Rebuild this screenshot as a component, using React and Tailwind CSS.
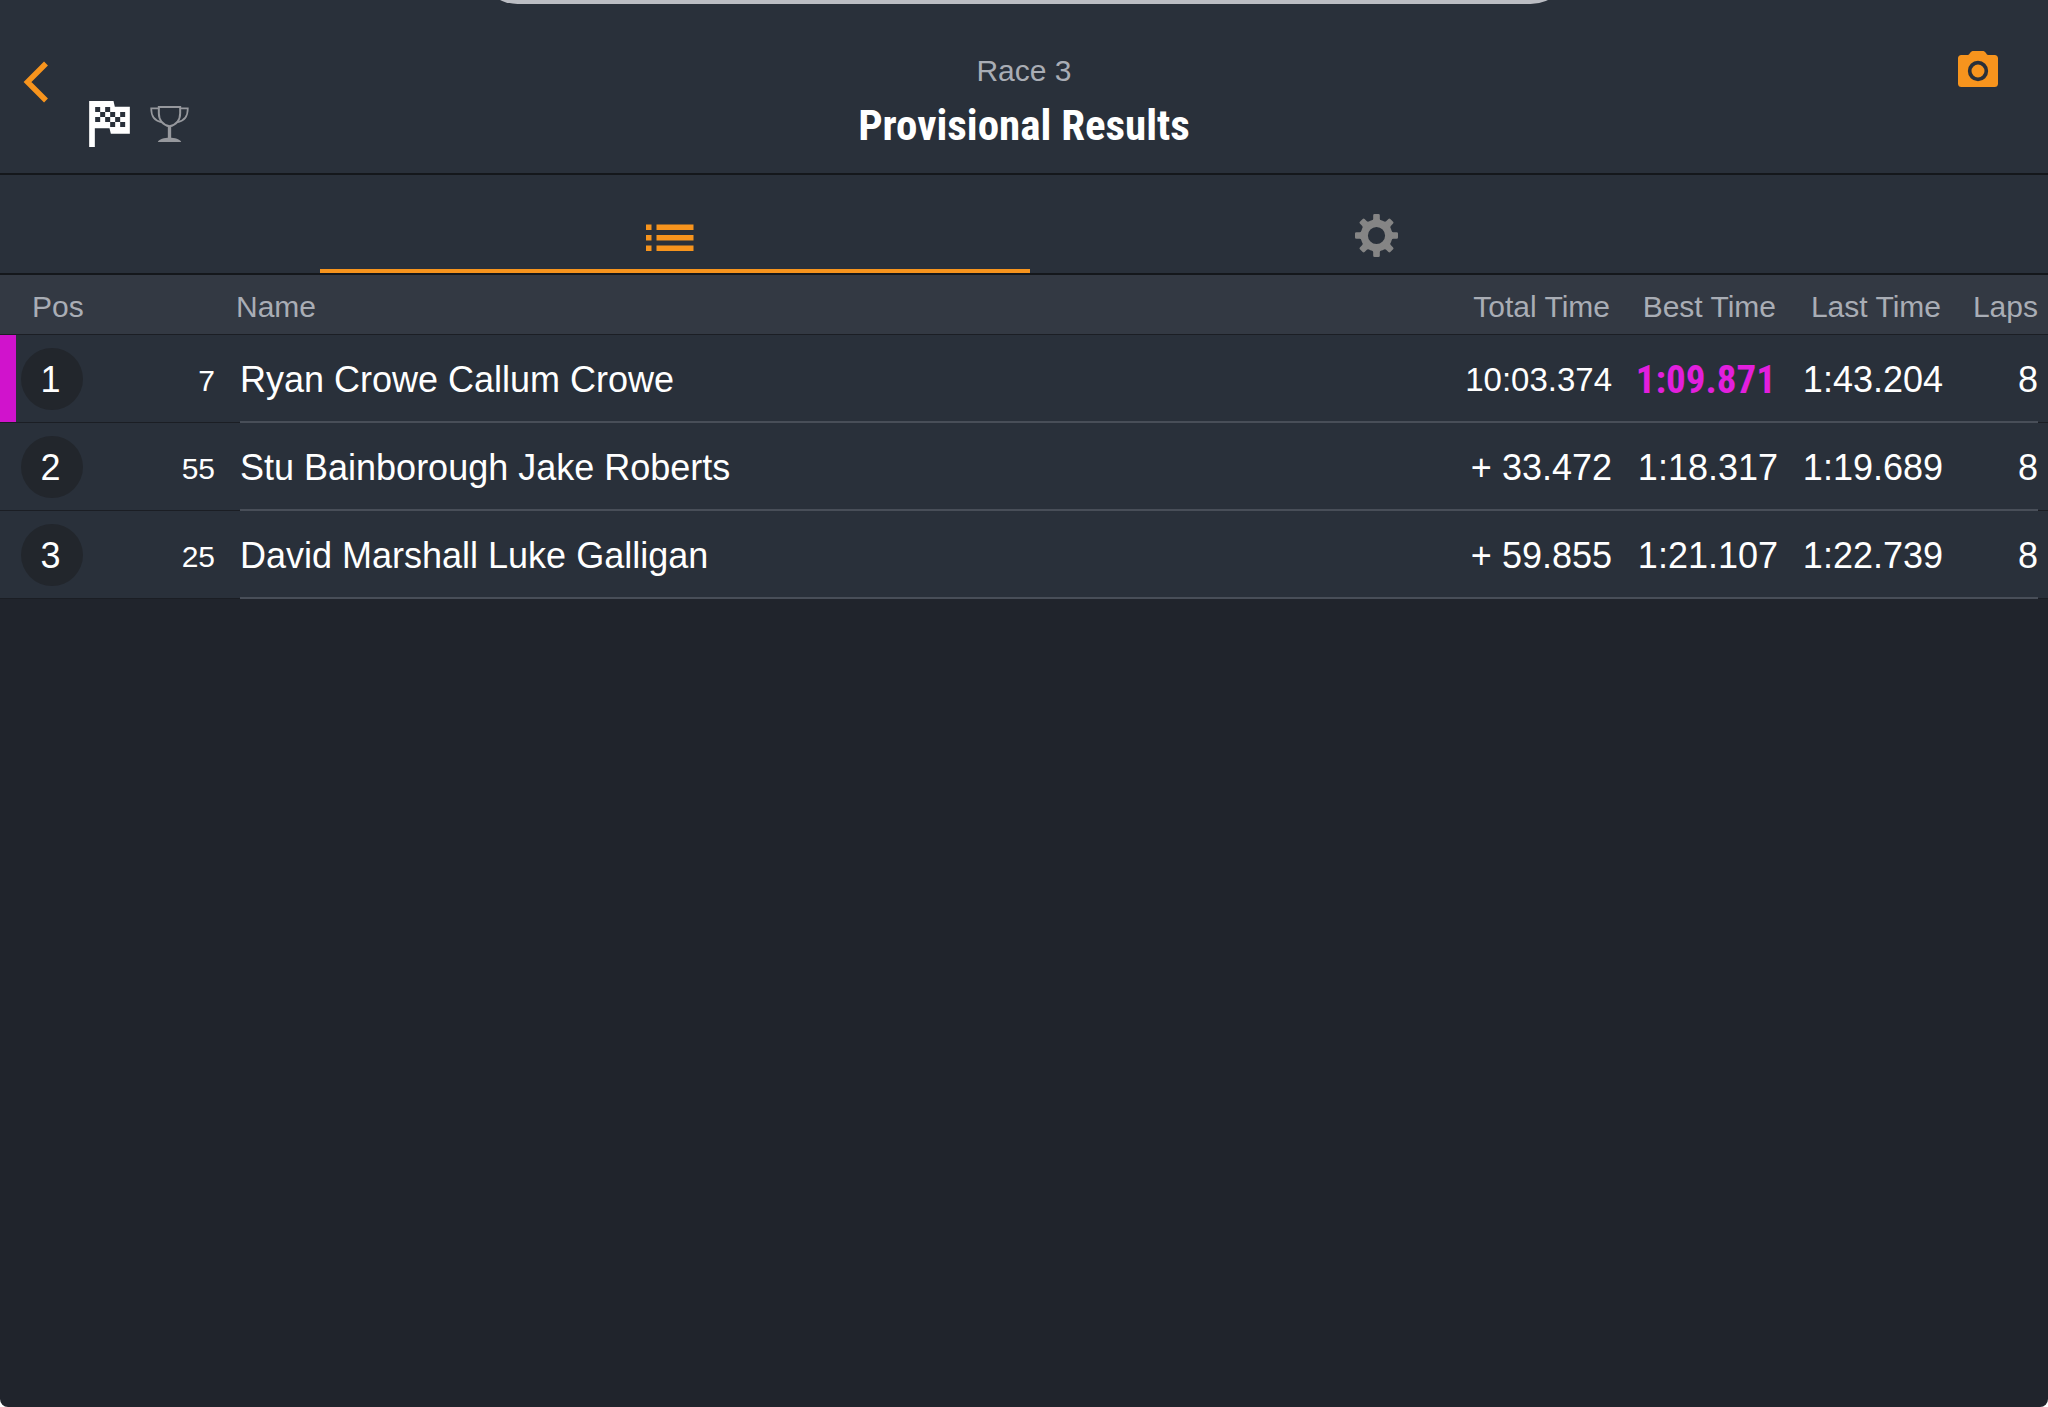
import React from 'react';

const results = [
  { pos: 1, number: 7, name: 'Ryan Crowe Callum Crowe', total: '10:03.374', best: '1:09.871', last: '1:43.204', laps: 8, fastest: true },
  { pos: 2, number: 55, name: 'Stu Bainborough Jake Roberts', total: '+ 33.472', best: '1:18.317', last: '1:19.689', laps: 8 },
  { pos: 3, number: 25, name: 'David Marshall Luke Galligan', total: '+ 59.855', best: '1:21.107', last: '1:22.739', laps: 8 },
];

const BackIcon = () => (
  <svg width="26" height="42" viewBox="0 0 26 42" fill="none" stroke="#f7941d" strokeWidth="5.5">
    <path d="M23 2.5 L4.5 21 L23 39.5" />
  </svg>
);

const FlagIcon = () => (
  <svg width="41" height="46" viewBox="0 0 122 138">
    <path fill="#fff" d="M0 0H73L77 17H122V98H65L61 82H17V138H0Z" />
    <path
      fill="#29303a"
      d="M18 18h15v15h-15z M48 18h15v15h-15z M33 33h15v15h-15z M63 33h15v15h-15z M93 33h15v15h-15z M18 48h15v15h-15z M48 48h15v15h-15z M78 48h15v15h-15z M63 63h15v15h-15z M93 63h15v15h-15z"
    />
  </svg>
);

const TrophyIcon = () => (
  <svg width="39" height="36" viewBox="0 0 116 108" fill="none" stroke="#96989d" strokeWidth="6">
    <path d="M26 3H90V22C90 42 78 57 58 61C38 57 26 42 26 22Z" />
    <path strokeWidth="5" d="M26 7H3C3 30 13 46 36 49" />
    <path strokeWidth="5" d="M90 7H113C113 30 103 46 80 49" />
    <path strokeWidth="10" d="M58 60V100" />
    <path fill="#96989d" stroke="none" d="M23 108C25 99 43 95 58 95C73 95 91 99 93 108Z" />
  </svg>
);

const CameraIcon = () => (
  <svg width="40" height="36" viewBox="0 0 120 108">
    <path
      fill="#f7941d"
      d="M10 12H30C34 12 38 0 44 0H76C82 0 86 12 90 12H110C116 12 120 16 120 22V98C120 104 116 108 110 108H10C4 108 0 104 0 98V22C0 16 4 12 10 12Z"
    />
    <circle cx="60" cy="60" r="25" fill="none" stroke="#29303a" strokeWidth="11" />
  </svg>
);

const ListIcon = () => (
  <svg width="48" height="28" viewBox="0 0 48 28" fill="#f7941d">
    <path d="M0 0.5h5.5v5.5h-5.5z M0 11h5.5v5.5h-5.5z M0 21.5h5.5v5.5h-5.5z M10.5 0.5h37v5.5h-37z M10.5 11h37v5.5h-37z M10.5 21.5h37v5.5h-37z" />
  </svg>
);

const GearIcon = () => (
  <svg width="43" height="43" viewBox="0 0 130 130" fill="#858585">
    <circle cx="65" cy="65" r="37" fill="none" stroke="#858585" strokeWidth="22" />
    {[0, 45, 90, 135, 180, 225, 270, 315].map((angle) => (
      <path
        key={angle}
        transform={`rotate(${angle} 65 65)`}
        d="M46 24C52 21 54 18 55 14V4Q55 0 59 0H71Q75 0 75 4V14C76 18 78 21 84 24V30H46Z"
      />
    ))}
  </svg>
);

const headCell = 'h-[60px] border-b border-[#1b1e24] p-0 pt-[3px] font-normal';
const darkLine = 'border-b border-[#1b1e24]';
const lightLine = 'border-b-2 border-[#484e58]';

const ResultRow = ({ result }) => (
  <tr className="bg-[#29303a]">
    <td className={`h-[88px] p-0 ${darkLine}`}>
      <div className="flex h-[87px] items-center">
        <span className={result.fastest ? 'h-full w-4 bg-[#d013cc]' : 'h-full w-4'} />
        <span className="ml-[5px] flex size-[62px] items-center justify-center rounded-full bg-[#22262c] pt-[2px] pr-[3px]">
          {result.pos}
        </span>
      </div>
    </td>
    <td className={`p-0 pt-[3px] pr-[25px] text-right text-[30px] ${darkLine}`}>{result.number}</td>
    <td className={`p-0 pt-1 ${lightLine}`}>{result.name}</td>
    {/* The leader shows a full race time, set a little smaller than the gaps */}
    <td className={`p-0 pt-1 text-right ${result.fastest ? 'text-[33px]' : ''} ${lightLine}`}>{result.total}</td>
    {result.fastest ? (
      <td className={`p-0 pt-1 pr-[2px] text-right font-['Roboto_Condensed','Liberation_Sans',sans-serif] text-[39px] font-bold text-[#e21fdd] ${lightLine}`}>
        {result.best}
      </td>
    ) : (
      <td className={`p-0 pt-1 text-right ${lightLine}`}>{result.best}</td>
    )}
    <td className={`p-0 pt-1 text-right ${lightLine}`}>{result.last}</td>
    <td className={`p-0 pt-1 text-right ${lightLine}`}>{result.laps}</td>
    <td className={`p-0 ${darkLine}`} />
  </tr>
);

const App = () => {
  return (
    <div className="relative min-h-screen overflow-hidden rounded-b-lg bg-[#20242c] font-['Liberation_Sans',Arial,sans-serif] text-white">
      {/* Sheet handle peeking in from above */}
      <div className="absolute -top-[76px] left-1/2 h-20 w-[1093px] -translate-x-1/2 rounded-[40px] bg-[#bbbdc3]" />

      <header className="grid h-[175px] grid-cols-3 border-b-2 border-[#14171b] bg-[#29303a]">
        <div className="flex items-start pt-[61px] pl-[23px]">
          <button type="button" aria-label="Back">
            <BackIcon />
          </button>
          <div className="ml-10 flex items-center gap-5 pt-10">
            <FlagIcon />
            <TrophyIcon />
          </div>
        </div>
        <div className="pt-[53px] text-center">
          <p className="text-[30px] leading-9 text-[#a9adb5]">Race 3</p>
          <h1 className="mt-3 font-['Roboto_Condensed','Liberation_Sans',sans-serif] text-[43px] leading-[48px] font-bold">
            Provisional Results
          </h1>
        </div>
        <div className="flex items-start justify-end pt-[51px] pr-[50px]">
          <button type="button" aria-label="Take photo">
            <CameraIcon />
          </button>
        </div>
      </header>

      <nav className="grid h-[100px] grid-cols-2 border-b-2 border-[#14171b] bg-[#29303a] px-80">
        <button type="button" aria-label="Results" className="relative flex justify-center pt-[49px] pr-1">
          <ListIcon />
          <span className="absolute -right-[6px] bottom-0 left-0 h-1 bg-[#f7941d]" />
        </button>
        <button type="button" aria-label="Settings" className="flex justify-center pt-[39px]">
          <GearIcon />
        </button>
      </nav>

      <table className="w-full table-fixed border-separate border-spacing-0 text-[36px]">
        <colgroup>
          <col className="w-[120px]" />
          <col className="w-[120px]" />
          <col />
          <col className="w-[180px]" />
          <col className="w-[166px]" />
          <col className="w-[165px]" />
          <col className="w-[95px]" />
          <col className="w-[10px]" />
        </colgroup>
        <thead>
          <tr className="bg-[#333943] text-left text-[30px] text-[#a9adb5]">
            <th className={`${headCell} pl-8`}>Pos</th>
            <th className={headCell} />
            <th className={headCell}>
              <span className="-ml-1">Name</span>
            </th>
            <th className={`${headCell} pr-[2px] text-right`}>Total Time</th>
            <th className={`${headCell} pr-[2px] text-right`}>Best Time</th>
            <th className={`${headCell} pr-[2px] text-right`}>Last Time</th>
            <th className={`${headCell} text-right`}>Laps</th>
            <th className={headCell} />
          </tr>
        </thead>
        <tbody>
          {results.map((result) => (
            <ResultRow key={result.pos} result={result} />
          ))}
        </tbody>
      </table>
    </div>
  );
};

export default App;
